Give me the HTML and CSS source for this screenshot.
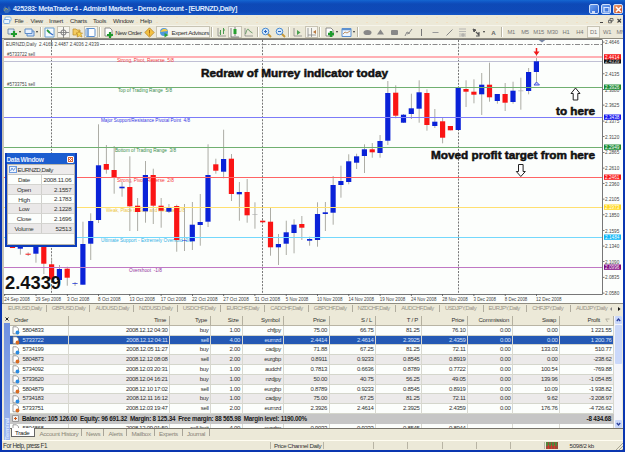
FILE: index.html
```html
<!DOCTYPE html>
<html lang="en">
<head>
    <meta charset="UTF-8">
    <title>425283: MetaTrader 4 - Admiral Markets - Demo Account - [EURNZD,Daily]</title>
    <link rel="stylesheet" href="styles.css">
</head>
<body>
    <div class="window">
        <div class="titlebar">
            <svg class="app-icon" width="8" height="8" viewBox="0 0 8 8"><path d="M0 4l2-3 2 3 2-3 2 4-3 3H2z" fill="#3d6fb5"/><path d="M1 6l2-3 2 2" fill="none" stroke="#8a9a70"/></svg>
            <span class="title">425283: MetaTrader 4 - Admiral Markets - Demo Account - [EURNZD,Daily]</span>
            <div class="win-buttons">
                <span class="win-btn"><svg width="9" height="9"><path d="M2 7h3" stroke="#fff" stroke-width="1.5"/></svg></span>
                <span class="win-btn"><svg width="9" height="9"><path d="M2 2.500h5v4.500h-5z" fill="none" stroke="#d8e8ff" stroke-width="1.2"/></svg></span>
                <span class="win-btn close"><svg width="9" height="9"><path d="M2 2l5 5M7 2l-5 5" stroke="#fff" stroke-width="1.5"/></svg></span>
            </div>
        </div>

        <div class="menubar">
            <svg class="menu-icon" width="9" height="9" viewBox="0 0 9 9"><rect x="2" y="1" width="6" height="4" rx="1" fill="#fff" stroke="#6aa4de" stroke-width=".8"/><rect x=".7" y="3.500" width="6" height="4" rx="1" fill="#e8f4ff" stroke="#5d9be0" stroke-width=".8"/></svg>
            <span class="menu m-file">File</span><span class="menu m-view">View</span><span class="menu m-insert">Insert</span><span class="menu m-charts">Charts</span><span class="menu m-tools">Tools</span><span class="menu m-window">Window</span><span class="menu">Help</span>
            <svg class="mdi" width="25" height="9" viewBox="0 0 25 9"><path d="M2 6.500h3M19.500 3l3.500 3.500M23 3l-3.500 3.500" stroke="#444" stroke-width="1.100"/><path d="M12 2.500h3v2.500h-3zM10.500 4.300h3v2.500h-3z" fill="#ece9d8" stroke="#555" stroke-width=".8"/></svg>
        </div>

        <div class="toolbar" id="toolbar"></div>

        <div class="chart-area">
            <svg class="chart" id="chart" width="618" height="264" viewBox="4 39 618 264"></svg>
            <div class="data-window">
                <div class="dw-title"><span>Data Window</span><span class="dw-close"><svg width="5" height="5"><path d="M1 1l3 3M4 1l-3 3" stroke="#fff"/></svg></span></div>
                <div class="dw-body">
                    <div class="dw-head"><svg width="8" height="7" viewBox="0 0 8 7"><rect x=".5" y=".5" width="7" height="6" fill="#eef5ff" stroke="#6c9be0"/><path d="M1.500 5l1.500-3 1.500 2.500 2-3" fill="none" stroke="#4a7fd0" stroke-width=".8"/></svg>EURNZD,Daily</div>
                    <div class="dw-row"><span>Date</span><b>2008.11.06</b></div>
                    <div class="dw-row"><span>Open</span><b>2.1557</b></div>
                    <div class="dw-row"><span>High</span><b>2.1783</b></div>
                    <div class="dw-row"><span>Low</span><b>2.1228</b></div>
                    <div class="dw-row"><span>Close</span><b>2.1696</b></div>
                    <div class="dw-row"><span>Volume</span><b>52513</b></div>
                </div>
            </div>
        </div>

        <div class="chart-tabs" id="chart-tabs"></div>

        <div class="terminal">
            <div class="strip"><svg width="6" height="6"><path d="M1.500 1.500l3 3M4.500 1.500l-3 3" stroke="#222"/></svg><span>Terminal</span></div>
            <div class="term-main">
                <div class="grid-wrap">
                    <div class="orders" id="orders"></div>
                    <div class="scrollbar">
                        <span class="sb-btn"><svg width="7" height="8"><path d="M1.800 5l1.700-2 1.700 2" fill="none" stroke="#2a3f9c" stroke-width="1.300"/></svg></span>
                        <span class="sb-thumb"></span>
                        <span class="sb-btn sb-down"><svg width="7" height="8"><path d="M1.800 3l1.700 2 1.700-2" fill="none" stroke="#2a3f9c" stroke-width="1.300"/></svg></span>
                    </div>
                </div>
                <div class="term-tabs">
                    <span class="tt active">Trade</span><span class="tt t-hist">Account History</span><span class="tt t-news">News</span><span class="tt t-alerts">Alerts</span><span class="tt t-mail">Mailbox</span><span class="tt t-exp">Experts</span><span class="tt t-jour">Journal</span>
                </div>
            </div>
        </div>

        <div class="statusbar">
            <span class="st-help">For Help, press F1</span>
            <span class="st-tpl">Price Channel Daily</span>
            <span class="st-cell wide"></span><span class="st-cell"></span><span class="st-cell"></span><span class="st-cell"></span><span class="st-cell"></span><span class="st-cell"></span>
            <span class="st-conn">
                <svg width="12" height="7" viewBox="0 0 12 7"><rect width="12" height="7" fill="#9a4a3a"/><path d="M1 0v4M4 0v4M7 0v4M10 0v4" stroke="#3a9a3a" stroke-width="1.500"/><path d="M2.500 3v4M5.500 3v4M8.500 3v4" stroke="#d83a2a" stroke-width="1.200"/></svg>
                <span>5098/2 kb</span>
            </span>
            <svg class="grip" width="8" height="8"><path d="M1 8l7-7M4 8l4-4M7 8l1-1" stroke="#a8a490"/></svg>
        </div>
    </div>
    <script src="script.js"></script>
</body>
</html>
```

FILE: styles.css
```css
* {
    box-sizing: border-box;
}

body {
    margin: 0;
    width: 625px;
    height: 452px;
    overflow: hidden;
    font-family: "Liberation Sans", Arial, sans-serif;
    font-size: 6.2px;
    color: #333;
}

svg {
    display: block;
    flex: none;
}

.window {
    width: 625px;
    height: 452px;
    padding: 0 2px 2px;
    background-color: #0a36b0;
    display: flex;
    flex-direction: column;
    white-space: nowrap;
}

/* title bar */
.titlebar {
    height: 15px;
    flex: none;
    margin: 0 -2px;
    padding: 2px 2px 0 3px;
    display: flex;
    align-items: center;
    background-image: radial-gradient(circle, rgba(10, 40, 140, 0.45) 0.6px, transparent 0.9px), linear-gradient(#1a80ec 0, #1268dc 2px, #1058c8 4px, #1158ca 12px, #1a6ae0 15px);
    background-size: 2px 2px, 100% 100%;
}

.title {
    margin-left: 2px;
    font-size: 7.2px;
    font-weight: bold;
    color: #dce8fc;
    letter-spacing: -0.4px;
}

.win-buttons {
    margin-left: auto;
    display: flex;
    gap: 2px;
}

.win-btn {
    width: 10px;
    height: 10px;
    border: 0.5px solid #cfe0fa;
    border-radius: 2px;
    background: linear-gradient(135deg, #6fa2ee, #2a62d2);
}

.win-btn.close {
    background: linear-gradient(135deg, #eea070, #cc4a20);
}

/* menu */
.menubar {
    height: 10px;
    flex: none;
    display: flex;
    align-items: center;
    padding-left: 1px;
    background-color: #ece9d8;
    background-image: radial-gradient(circle, #f4dfc0 0.5px, transparent 0.8px);
    background-size: 10px 5px;
    color: #333;
    letter-spacing: -0.25px;
}

.menu-icon {
    margin-right: 2.5px;
}

.m-file { width: 16px; }
.m-view { width: 18.5px; }
.m-insert { width: 21px; }
.m-charts { width: 23px; }
.m-tools { width: 20px; }
.m-window { width: 27px; }

.mdi {
    margin-left: auto;
}

/* toolbar */
.toolbar {
    height: 14px;
    flex: none;
    display: flex;
    align-items: center;
    padding-left: 3px;
    overflow: hidden;
    background-color: #ebe8d8;
    border-top: 1px solid #f6f4ea;
    border-bottom: 1px solid #8f8c80;
    color: #666;
}

.tool {
    width: 13.7px;
    height: 12px;
    flex: none;
    display: flex;
    align-items: center;
    justify-content: center;
}

.tool.drop {
    width: 17px;
    justify-content: flex-start;
    padding-left: 1.5px;
}

.tool.on {
    background-color: #f6f5ee;
    border: 0.5px solid #c8c4b4;
}

.tool.period {
    font-size: 5.8px;
    color: #777;
    letter-spacing: -0.2px;
}

.arrow {
    border: 1.5px solid transparent;
    border-top: 2px solid #333;
    border-bottom: 0;
    margin-left: 1px;
}

.sep {
    flex: none;
    width: 4px;
    height: 10px;
    background: linear-gradient(90deg, transparent 1px, #b8b4a4 1px, #b8b4a4 2px, #fff 2px, #fff 3px, transparent 3px);
}

.tool.order {
    width: 41px;
    justify-content: flex-start;
    padding-left: 1.5px;
    gap: 1px;
    color: #333;
    letter-spacing: -0.4px;
}

.tool.experts {
    width: 54px;
    justify-content: flex-start;
    padding-left: 1.5px;
    gap: 1.5px;
    color: #333;
    letter-spacing: -0.36px;
}

/* chart */
.chart-area {
    height: 264px;
    flex: none;
    position: relative;
    background-color: #fcfefc;
    border-left: 2px solid #c8c5b8;
}

.chart text {
    font-size: 5.6px;
}

.chart .note {
    font-size: 10.6px;
    font-weight: bold;
    fill: #111;
    stroke: #111;
    stroke-width: 0.5px;
}

.chart .quote {
    font-size: 18px;
    font-weight: bold;
    fill: #111;
}

/* data window */
.data-window {
    position: absolute;
    left: 0.5px;
    top: 114px;
    width: 72px;
    height: 94px;
    padding: 0 2px 2px;
    background-color: #0c3cba;
}

.dw-title {
    height: 11px;
    display: flex;
    align-items: center;
    justify-content: space-between;
    padding: 1px 1px 0 0;
    color: #e4edff;
    font-size: 6.6px;
    font-weight: bold;
    letter-spacing: -0.4px;
    background-image: radial-gradient(circle, #2470dc 0.6px, transparent 0.9px);
    background-size: 2px 2px;
}

.dw-close {
    background-color: #dc6a3c;
    border: 0.5px solid #fff;
    border-radius: 1px;
}

.dw-body {
    height: 81px;
    background-color: #fcfefc;
    border: 1px solid #b8b6ac;
    letter-spacing: -0.25px;
}

.dw-head {
    height: 10px;
    display: flex;
    align-items: center;
    gap: 1px;
    padding-left: 1px;
    background-color: #eeecec;
    border-bottom: 1px solid #c8c8c4;
    letter-spacing: -0.5px;
}

.dw-row {
    height: 9.75px;
    display: flex;
    align-items: center;
    border-bottom: 0.5px solid #d4d4d0;
}

.dw-row:nth-child(odd) {
    background-color: #eae8e8;
}

.dw-row span {
    width: 34px;
    height: 100%;
    line-height: 9.5px;
    text-align: center;
    border-right: 1px solid #d0d0cc;
}

.dw-row b {
    flex: 1;
    padding-right: 2px;
    text-align: right;
    font-weight: normal;
}

/* chart tabs */
.chart-tabs {
    height: 10px;
    flex: none;
    display: flex;
    align-items: center;
    padding-left: 1px;
    background-color: #ece9d8;
    border-top: 1px solid #8f8c80;
    color: #98948a;
    font-size: 5.9px;
    letter-spacing: -0.5px;
}

.chart-tab {
    width: 43.7px;
    flex: none;
    padding-left: 5px;
    border-right: 1px solid #b0ac9e;
    line-height: 7px;
}

.chart-tab:nth-child(14) {
    border: 0;
    width: 37px;
}

/* terminal */
.terminal {
    height: 127px;
    flex: none;
    display: flex;
    padding-top: 3px;
    background-color: #ece9d8;
}

.strip {
    width: 8px;
    padding-left: 1px;
    display: flex;
    flex-direction: column;
    align-items: center;
}

.strip span {
    flex: 1;
    width: 6px;
    margin-top: 1px;
    background: linear-gradient(#9cb6ee, #6e90e0);
    color: #d8e4ff;
    font-size: 6px;
    font-weight: bold;
    line-height: 6px;
    writing-mode: vertical-rl;
    transform: rotate(180deg);
    letter-spacing: -0.3px;
}

.term-main {
    flex: 1;
    min-width: 0;
}

.grid-wrap {
    height: 112.5px;
    display: flex;
    overflow: hidden;
    border-bottom: 1px solid #77746a;
}

.orders {
    width: 604px;
    letter-spacing: -0.32px;
    font-size: 6px;
    background-color: #fcfefc;
}

.row {
    display: grid;
    grid-template-columns: 59px 101px 41px 31.5px 41px 46px 46.5px 46px 46px 45px 47px 54px;
    height: 9.8px;
    align-items: center;
    border-bottom: 0.5px solid #d4d6cc;
}

.row > span {
    height: 100%;
    line-height: 9.6px;
    text-align: right;
    padding-right: 1.5px;
    border-right: 0.5px solid #d8d8d0;
}

.row > span:first-child {
    display: flex;
    align-items: center;
    gap: 3px;
    padding-left: 1.5px;
    text-align: left;
}

.row.head {
    background-color: #ece9d8;
    letter-spacing: -0.25px;
    border-bottom-color: #b8b4a4;
}

.row.head > span {
    padding-right: 3px;
    border-right-color: #b4b0a0;
}

.row.head > span:first-child {
    padding-left: 4px;
}

.row.head > span:last-child {
    display: flex;
    align-items: center;
    justify-content: flex-end;
    gap: 5px;
}

.row.alt {
    background-color: #eceaea;
}

.row.selected {
    background-color: #2c64c4;
    background-image: radial-gradient(circle, #1c4ca4 0.5px, transparent 0.9px);
    background-size: 2px 2px;
    color: #d4e2fa;
}

.balance {
    height: 9.8px;
    display: flex;
    align-items: center;
    justify-content: space-between;
    padding: 0 3px 0 2px;
    background-color: #c6c6c6;
    color: #181818;
    font-weight: bold;
    font-size: 6.3px;
    letter-spacing: -0.24px;
}

.balance div {
    display: flex;
    gap: 3px;
    align-items: center;
}

.scrollbar {
    flex: none;
    width: 8px;
    display: flex;
    flex-direction: column;
    align-items: center;
    background-color: #f4f5fa;
}

.sb-btn,
.sb-thumb {
    width: 7px;
    height: 8px;
    background-color: #cad8fa;
    border-radius: 1px;
}

.sb-thumb {
    height: 39px;
    margin-top: 1px;
}

.sb-down {
    margin-top: auto;
}

.term-tabs {
    height: 10px;
    display: flex;
    padding-left: 1px;
    color: #89857a;
    line-height: 9px;
    letter-spacing: -0.3px;
}

.tt {
    padding-left: 4.5px;
    height: 7px;
    border-right: 0.5px solid #a8a498;
}

.tt.active {
    width: 24px;
    height: 9px;
    margin-top: -1px;
    background-color: #fff;
    color: #222;
    border: 1px solid #666;
    border-top: 0;
    padding-left: 3px;
}

.t-hist { width: 46.5px; }
.t-news { width: 22.5px; }
.t-alerts { width: 23px; }
.t-mail { width: 27.5px; }
.t-exp { width: 28px; }
.t-jour { width: 27px; }

/* status bar */
.statusbar {
    flex: 1;
    display: flex;
    align-items: center;
    padding-left: 1px;
    background-color: #ece9d8;
    border-top: 1px solid #fffdf2;
    letter-spacing: -0.45px;
}

.st-help {
    width: 267px;
    font-size: 6.3px;
}

.st-tpl,
.st-cell {
    height: 7px;
    line-height: 7px;
    border-left: 0.5px solid #b8b4a4;
}

.st-tpl {
    width: 53px;
    padding-left: 3px;
    letter-spacing: -0.37px;
}

.st-cell {
    width: 34.3px;
}

.st-cell.wide {
    width: 50px;
}

.st-conn {
    display: flex;
    align-items: center;
    gap: 11px;
    padding-left: 1px;
    border-left: 0.5px solid #b8b4a4;
    letter-spacing: -0.3px;
}

.grip {
    margin-left: auto;
}
```

FILE: script.js
```js
// ---- toolbar ----
const icons = {
    newchart: '<path d="M1 2h6v5H1z" fill="#dfeaf8" stroke="#5878a0" stroke-width=".8"/><path d="M7 4v6M4 7h6" stroke="#1f9a2c" stroke-width="2.2"/>',
    profiles: '<path d="M3 4h7v5H3z" fill="#cfe2fa" stroke="#5c8cc8"/><path d="M1 2h7v4.500H1z" fill="#e8f2ff" stroke="#5c8cc8"/>',
    market: '<path d="M1 1h9v9H1z" fill="#f4f9ff" stroke="#6aa0d0"/><path d="M3 3l3 3" stroke="#289838" stroke-width="1.800"/><path d="M6 6l3 2" stroke="#3a70c8" stroke-width="1.500"/>',
    cross: '<circle cx="5.500" cy="5.500" r="2.600" fill="none" stroke="#777"/><path d="M5.500 0v11M0 5.500h11" stroke="#777" stroke-width=".8"/>',
    navigator: '<path d="M1 2h3l1 1h3v5H1z" fill="#f4cc60" stroke="#b88a28" stroke-width=".7"/><path d="M7 4l1 2h2.500L9 7.500l1 2.500-2.500-1L5 10l.8-2.500L4 6h2z" fill="#f8d850" stroke="#b88020" stroke-width=".6"/>',
    datawin: '<rect x="1" y="1.500" width="9" height="8" rx="1" fill="#fff" stroke="#5c90d0"/><path d="M3 2v7" stroke="#5c90d0" stroke-width="1.500"/>',
    neworder: '<path d="M2 1h5l2 2v6H2z" fill="#fff" stroke="#777" stroke-width=".8"/><path d="M7 5v6M4 8h6" stroke="#1f9a2c" stroke-width="2.200"/>',
    diamond: '<path d="M5.500.8l4.700 4.700-4.700 4.700L.8 5.500z" fill="#f4c040" stroke="#b8862a" stroke-width=".8"/><path d="M5.500 3v3.500M5.500 7.500v1" stroke="#a86a10"/>',
    expert: '<circle cx="5" cy="5" r="4" fill="#4c98dc"/><path d="M1 5q4-6 8-1z" fill="#f4c848"/><path d="M5.500 6l4 2-4 2.500z" fill="#2fa03a"/>',
    bars: '<path d="M2 1v8h8" fill="none" stroke="#888" stroke-width=".8"/><path d="M4.500 3v5M7.500 1v6M3.500 6h1M7.500 3h1.500" stroke="#4a9a50"/>',
    candles: '<path d="M2 1v9h8M6 0v9" fill="none" stroke="#666" stroke-width=".8"/><path d="M4.500 2h3v5h-3z" fill="#28a030"/>',
    line: '<path d="M2 1v8h8" fill="none" stroke="#888" stroke-width=".8"/><path d="M2.500 7q2-8 4-3l3 2" fill="none" stroke="#6a9a68"/>',
    zoomin: '<path d="M6.500 6.500l3.500 3.500" stroke="#c89838" stroke-width="2"/><circle cx="4.500" cy="4.500" r="3.300" fill="#d4e8fc" stroke="#4a8ad0"/><path d="M4.500 3v3M3 4.500h3" stroke="#2a68c0"/>',
    zoomout: '<path d="M6.500 6.500l3.500 3.500" stroke="#c89838" stroke-width="2"/><circle cx="4.500" cy="4.500" r="3.300" fill="#d4e8fc" stroke="#4a8ad0"/><path d="M3 4.500h3" stroke="#2a68c0"/>',
    scroll: '<path d="M2 1v8h8" fill="none" stroke="#888" stroke-width=".8"/><path d="M5 3l3.500 2.500L5 8z" fill="#4aa050"/>',
    shift: '<path d="M2 1v9M5.500 1v9M2 8h8" stroke="#888" stroke-width=".8"/><path d="M10 3v4L7 5z" fill="#b87840"/>',
    indic: '<path d="M2 1h5l2 2v6H2z" fill="#fff" stroke="#777" stroke-width=".8"/><path d="M7 4v6M4 7h6" stroke="#1f9a2c" stroke-width="2.500"/>',
    templ: '<path d="M1 1.500h9v8H1z" fill="#eef6ff" stroke="#5c90d0"/><path d="M1 2.500h9" stroke="#5c90d0" stroke-width="1.500"/><path d="M2 7l2-2 2 1 3-2" fill="none" stroke="#b07840" stroke-width=".8"/>',
    ellipse: '<ellipse cx="5.500" cy="5.500" rx="4" ry="2.600" fill="#888"/>',
    tri: '<path d="M5.500 2.500l3.500 5h-7z" fill="#888"/>',
    rect: '<rect x="2" y="3" width="7" height="5" rx="1" fill="#888"/>',
    cycle: '<path d="M2 9l2-4 2 1 3-4M4 7l3-1" fill="none" stroke="#888"/>',
    vline: '<path d="M5.500 2v7" stroke="#777"/>',
    hline: '<path d="M2.500 5.500h6" stroke="#999"/>',
    trend: '<path d="M2.500 8.500l6-6" stroke="#888"/>',
    fibo: '<path d="M2 2h7M2 4.500h7M2 7h7M2 9h7" stroke="#aaa" stroke-width=".8"/><path d="M6 6v4M4 8h4" stroke="#999" stroke-width=".6"/>',
    arrows: '<path d="M2 2l3 1-2 2z" fill="#555" stroke="#555"/><path d="M5 5l3 3M8 5v4H5" fill="none" stroke="#555" stroke-width="1.200"/>'
};

const tools = [
    'newchart+', 'profiles+', '|', 'market', 'cross*', 'navigator', 'datawin*', '|', 'neworder:New Order', 'diamond',
    'expert:Expert Advisors', '|', 'bars', 'candles*', 'line', '|', 'zoomin', 'zoomout', '|', 'scroll', 'shift*', '|',
    'indic+', 'templ+', '|', 'ellipse', 'tri', 'rect', 'cycle', 'vline', 'hline', 'trend', 'fibo', 'arrows+'
];

function icon(name) {
    return '<svg width="11" height="11" viewBox="0 0 11 11">' + icons[name] + '</svg>';
}

let bar = '';
tools.forEach(t => {
    const [id, label] = t.split(':');
    const name = id.replace(/[+*]/, '');
    if (t === '|') {
        bar += '<span class="sep"></span>';
    } else if (label) {
        bar += '<span class="tool ' + (name === 'expert' ? 'experts on' : 'order') + '">' + icon(name) + label + '</span>';
    } else if (id.endsWith('+')) {
        bar += '<span class="tool drop">' + icon(name) + '<i class="arrow"></i></span>';
    } else {
        bar += '<span class="tool' + (id.endsWith('*') ? ' on' : '') + '">' + icon(name) + '</span>';
    }
});
bar += '<b class="tool">A</b><span class="sep"></span>';
['M1', 'M5', 'M15', 'M30', 'H1', 'H4', 'D1', 'W1', 'MN'].forEach(p => {
    bar += '<span class="tool period' + (p === 'D1' ? ' on' : '') + '">' + p + '</span>';
});
document.getElementById('toolbar').innerHTML = bar;

// ---- chart ----
// colour, body top, body bottom, wick top, wick bottom
const candles = [
    ['r', 246, 248, 246, 248], ['b', 246, 248.7, 246, 254.7], ['r', 253.7, 254.7, 252.3, 256], ['b', 246, 253.7, 246, 262.7],
    ['r', 246, 263.7, 246, 274], ['r', 264.3, 279.5, 258, 281], ['b', 269, 280, 265, 281], ['r', 268.7, 277.7, 266.7, 285.7],
    ['b', 283.3, 284, 282, 286], ['b', 244, 284.7, 221.7, 284.7], ['b', 221, 243.7, 213.3, 260], ['b', 165.3, 220, 124.3, 223],
    ['r', 164, 169.7, 145, 173.7], ['r', 170, 177.7, 146, 193.7], ['b', 186.7, 188.3, 182, 196.7], ['r', 187, 206.3, 156.3, 231],
    ['r', 205.7, 212, 198, 231], ['b', 175, 211.3, 161, 222.7], ['r', 175, 205.7, 168.7, 224], ['r', 205.7, 210.7, 198, 227.7],
    ['b', 207.3, 211.7, 204, 213], ['r', 206, 240, 204.7, 251.7], ['b', 240.3, 240.8, 204, 251], ['b', 224.7, 241.3, 202, 250],
    ['b', 222, 225, 194, 245.7], ['b', 175, 221.7, 144.3, 227], ['r', 164.3, 170.7, 158.7, 173.7], ['b', 159, 171.7, 129.7, 178.3],
    ['r', 158.7, 194, 154, 201], ['b', 192, 194.3, 182, 220.7], ['r', 192, 215.3, 179, 222.7], ['g', 214, 214.6, 202.3, 228.7],
    ['r', 220.7, 222.3, 220, 223], ['r', 221.7, 247.3, 208, 255.7], ['b', 244, 247.3, 234, 265], ['b', 232.3, 243.7, 220.7, 255],
    ['b', 224.7, 233, 219.3, 253.3], ['r', 224, 227.7, 216, 240], ['b', 239, 240.7, 236.7, 245.7], ['b', 214, 240, 202.3, 246.7],
    ['b', 212.3, 214, 202, 231], ['b', 185, 212.7, 176, 224.7], ['b', 181, 185, 165.7, 197.7], ['b', 161.3, 182, 154.3, 184.3],
    ['b', 156.3, 162.7, 153.7, 169], ['b', 149.3, 156, 144.3, 173], ['r', 149.3, 152.3, 143, 157.7], ['b', 141, 153, 135, 157.7],
    ['b', 93, 140.7, 81, 145], ['r', 92.7, 115.7, 85.3, 118.3], ['b', 114.7, 122.7, 114, 123], ['b', 108.3, 114, 93.7, 119],
    ['b', 92.3, 108.7, 80.3, 122.7], ['r', 93, 125, 89.3, 130.7], ['b', 121.7, 126, 109, 128], ['r', 121.3, 137.7, 117.7, 143.3],
    ['r', 126, 130.3, 126, 130.3], ['b', 88, 130, 88, 130], ['r', 89, 91.7, 80.3, 107], ['r', 91.7, 94.7, 79.3, 103.3],
    ['b', 84.7, 94.3, 73, 115], ['r', 84.7, 97.3, 62.7, 101.7], ['b', 94, 101, 94, 103.7], ['r', 94, 102.7, 83, 111],
    ['b', 90.7, 102, 81.7, 103.7], ['g', 90.5, 91.2, 77.7, 109.7], ['b', 72, 91, 68, 94.3], ['b', 61.3, 72, 55, 82]
];
const fills = { r: '#fa1414', b: '#0a22d8', g: '#aaa' };

// y, line colour, tag colour, price, label, label x, label width, label colour
const levels = [
    [57, '#ffb0b4', '#f81818', '2.4414', 'Strong, Pivot, Reverse&#160; 5/8', 117, 57, '#f43c3c'],
    [87.3, '#70b070', '#1c8c34', '2.3926', 'Top of Trading Range&#160; 5/8', 118, 54, '#3a8c4a'],
    [117.3, '#7c7cf8', '#1818f0', '2.3438', 'Major Support/Resistance Pivotal Point&#160; 4/8', 101, 89, '#3434e0'],
    [147.3, '#70b070', '#1c8c34', '2.2949', 'Bottom of Trading Range&#160; 3/8', 115, 61, '#3a8c4a'],
    [177.3, '#ff6464', '#f81818', '2.2461', 'Strong, Pivot, Reverse&#160; 2/8', 117, 57, '#f43c3c'],
    [207.3, '#ffe070', '#ffd820', '2.1973', 'Weak, Place to Stop and Reverse&#160; 1/8', 106, 79, '#ecc440'],
    [237.3, '#74d8fc', '#10b8f8', '2.1484', 'Ultimate Support - Extremely Oversold&#160; 0/8', 101, 91, '#30b0e4'],
    [267.3, '#c078c4', '#800a80', '2.0996', 'Overshoot&#160; -1/8', 129, 33, '#94389c']
];

function text(x, y, w, str, fill, cls) {
    return '<text x="' + x + '" y="' + y + '" textLength="' + w + '" lengthAdjust="spacingAndGlyphs" fill="' + fill + '" class="' + (cls || '') + '">' + str + '</text>';
}

function rect(x, y, w, h, fill) {
    return '<rect x="' + x + '" y="' + y + '" width="' + w + '" height="' + h + '" fill="' + fill + '"/>';
}

let g = '';
[51.5, 262.5, 458.5].forEach(x => {
    g += '<path d="M' + x + ' 40V294" stroke="#777" stroke-dasharray="2 1.300"/>';
});
g += '<path d="M100 44.500H602" stroke="#8a8a8a" stroke-dasharray="5 1.500 1.500 1.500"/>';
g += rect(4, 61, 598, 1, '#c0c0d4');

// level captions sit under the candles
levels.forEach(l => {
    g += text(l[5], l[0] + 4.6, l[6], l[4], l[7]);
});
candles.forEach((c, i) => {
    const x = 98.5 + (i - 11) * 7.82;
    g += rect((x - 0.4).toFixed(1), c[3], 0.9, c[4] - c[3], '#a4a49c');
    g += rect((x - 2.6).toFixed(1), c[1], 5.2, c[2] - c[1], fills[c[0]]);
});
levels.forEach((l, i) => {
    g += rect(4, Math.floor(l[0]) - (i ? 0 : 1), 598, i ? 1 : 2, l[1]);
});

g += text(6, 46, 93, 'EURNZD,Daily&#160; 2.4165 2.4487 2.4036 2.4339', '#444');
g += text(7, 55.7, 28, '#5733722 sell', '#444');
g += text(7, 86, 28, '#5733751 sell', '#444');

// trade arrows
g += '<path d="M536.500 48v5" stroke="#f01818" stroke-width="1.500"/><path d="M533.500 51.500h6l-3 4z" fill="#f01818"/>';
g += '<path d="M534 85l2.500-3 3 3z" fill="#c8ccf8" stroke="#4050e0"/><path d="M538 39.500h8l-4 3z" fill="#7888a8"/>';
g += '<path d="M575.500 88l4.500 5.500h-2.200v6.500h-4.600v-6.500H571z" fill="#fff" stroke="#222"/>';
g += '<path d="M520.800 176.500l4.500-5h-2.200v-7h-4.600v7h-2.200z" fill="#fff" stroke="#222"/>';
g += text(201, 76.6, 187, 'Redraw of Murrey indicator today', '#111', 'note');
g += text(556, 115, 39, 'to here', '#111', 'note');
g += text(431, 158.5, 164, 'Moved profit target from here', '#111', 'note');
g += text(5, 288.7, 56, '2.4339', '#111', 'quote');

// axes
g += '<path d="M602.500 39.500V294.500H4M4 39.500h598" fill="none" stroke="#777"/>';
const prices = [['2.4646', 42], ['2.4135', 73.7], ['2.3880', 89.5], ['2.3625', 105], ['2.3375', 121], ['2.3120', 136.5], ['2.2865', 152.3],
    ['2.2610', 168], ['2.2360', 183.5], ['2.2105', 199], ['2.1850', 214.7], ['2.1595', 230.5], ['2.1340', 246], ['2.1090', 261.5], ['2.0835', 277.2], ['2.0580', 293]];
prices.forEach(p => {
    g += rect(603, p[1] - 0.3, 1.5, 0.8, '#555') + text(605, p[1] + 2, 14.3, p[0], '#444');
});
g += rect(604, 58, 17, 5.5, '#111') + text(605, 62.9, 14.5, '2.4339', '#ddd');
levels.forEach(l => {
    g += rect(604, l[0] - 2.8, 17, 5.3, l[2]) + text(605, l[0] + 1.8, 14.5, l[3], '#fff');
});
['24 Sep', '29 Sep', '3 Oct', '8 Oct', '13 Oct', '17 Oct', '22 Oct', '27 Oct', '31 Oct', '5 Nov', '10 Nov', '14 Nov', '19 Nov', '24 Nov', '28 Nov', '3 Dec', '8 Dec', '12 Dec'].forEach((d, i) => {
    const x = 4.3 + i * 31.28;
    g += rect(x.toFixed(1), 294, 0.8, 2, '#555') + text(x.toFixed(1), 300.7, d.length === 5 ? 22.5 : 25.5, d + ' 2008', '#444');
});
document.getElementById('chart').innerHTML = g;

// ---- chart tabs ----
let tabs = '';
['EURUSD', 'GBPUSD', 'AUDUSD', 'NZDUSD', 'USDCHF', 'EURCHF', 'CADCHF', 'GBPCHF', 'NZDCHF', 'AUDCHF', 'USDJPY', 'EURJPY', 'CHFJPY', 'AUDJPY'].forEach(s => {
    tabs += '<span class="chart-tab">' + s + ',Daily</span>';
});
tabs += '<svg width="14" height="8"><path d="M4 2v4L2 4z" fill="#888"/><path d="M10 2v4l2.500-2z" fill="#111"/></svg>';
document.getElementById('chart-tabs').innerHTML = tabs;

// ---- orders ----
const rows = [
    '5804833|2008.12.12 04:30|buy|1.00|chfjpy|75.00|66.75|81.25|76.10|0.00|0.00|1 221.55',
    '5733722|2008.12.12 04:11|sell|4.00|eurnzd|2.4414|2.4614|2.3925|2.4359|0.00|0.00|1 200.76',
    '5734199|2008.12.05 11:27|buy|2.00|cadjpy|71.88|67.25|81.25|72.11|0.00|133.03|510.77',
    '5804873|2008.12.12 08:08|sell|2.00|eurgbp|0.8911|0.9233|0.8545|0.8919|0.00|0.00|-238.62',
    '5734092|2008.12.03 20:31|buy|1.00|audchf|0.7813|0.6636|0.8789|0.7722|0.00|100.54|-769.88',
    '5733620|2008.12.04 16:21|buy|1.00|nzdjpy|50.00|40.75|56.25|49.05|0.00|139.96|-1 054.85',
    '5804879|2008.12.10 17:02|sell|1.00|eurgbp|0.8789|0.9233|0.8545|0.8919|0.00|10.09|-1 938.82',
    '5734183|2008.12.11 16:12|buy|1.00|cadjpy|75.00|67.25|81.25|72.11|0.00|9.62|-3 208.97',
    '5733751|2008.12.03 19:47|sell|2.00|eurnzd|2.3926|2.4614|2.3925|2.4359|0.00|176.76|-4 726.62'
];

function orderRow(line, cls) {
    const cells = line.split('|');
    const dot = cells[2] === 'buy' ? '#2a8ae0' : '#d86a20';
    const page = '<svg width="8" height="9" viewBox="0 0 8 9"><path d="M1 .8h3.500l2 2v5H1z" fill="#fff" stroke="#777" stroke-width=".7"/><circle cx="5.500" cy="6.500" r="1.900" fill="' + dot + '"/></svg>';
    return '<div class="row ' + cls + '"><span>' + page + cells[0] + '</span>' + cells.slice(1).map(c => '<span>' + c + '</span>').join('') + '</div>';
}

const sortMark = '<svg width="5" height="5"><path d="M.5 1h4M1 1l1.500 3" fill="none" stroke="#a8a498" stroke-width=".8"/></svg>';
let html = '<div class="row head">' + ['Order', 'Time', 'Type', 'Size', 'Symbol', 'Price', 'S / L', 'T / P', 'Price', 'Commission', 'Swap', 'Profit' + sortMark].map(h => '<span>' + h + '</span>').join('') + '</div>';
rows.forEach((r, i) => {
    html += orderRow(r, i === 1 ? 'selected' : i % 2 ? 'alt' : '');
});
html += '<div class="balance"><div><svg width="7" height="7"><path d="M.5.5h6v6h-6z" fill="#eee" stroke="#999"/><path d="M3.500 2v3M2 3.500h3" stroke="#c85a20"/></svg>' +
    '<span>Balance: 105 126.00&nbsp; Equity: 96 691.32&nbsp; Margin: 8 125.34&nbsp; Free margin: 88 565.98&nbsp; Margin level: 1190.00%</span></div><span>-8 434.68</span></div>';
html += orderRow('5804868|2008.12.09 01:50|sell limit|4.00|eurgbp|0.9033|0.9233|0.8545|0.8944|||', '');
document.getElementById('orders').innerHTML = html;
```
